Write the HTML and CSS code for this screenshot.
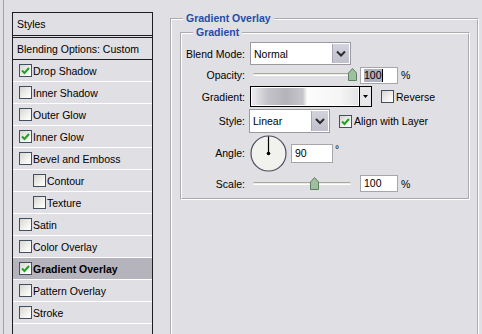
FILE: index.html
```html
<!DOCTYPE html>
<html lang="en">
<head>
    <meta charset="UTF-8">
    <title>Layer Style</title>
    <link rel="stylesheet" href="styles.css">
</head>
<body>

    <div class="window">
        <div class="styles-panel">
            <div class="panel-head">Styles</div>
            <div class="style-row blend-opts">Blending Options: Custom</div>
            <div class="style-row"><span class="cb on"><svg viewBox="0 0 11 11"><polyline points="2,5.5 4.5,8 9,3"/></svg></span>Drop Shadow</div>
            <div class="style-row"><span class="cb"></span>Inner Shadow</div>
            <div class="style-row"><span class="cb"></span>Outer Glow</div>
            <div class="style-row"><span class="cb on"><svg viewBox="0 0 11 11"><polyline points="2,5.5 4.5,8 9,3"/></svg></span>Inner Glow</div>
            <div class="style-row"><span class="cb"></span>Bevel and Emboss</div>
            <div class="style-row sub"><span class="cb"></span>Contour</div>
            <div class="style-row sub"><span class="cb"></span>Texture</div>
            <div class="style-row"><span class="cb"></span>Satin</div>
            <div class="style-row"><span class="cb"></span>Color Overlay</div>
            <div class="style-row active"><span class="cb on"><svg viewBox="0 0 11 11"><polyline points="2,5.5 4.5,8 9,3"/></svg></span>Gradient Overlay</div>
            <div class="style-row"><span class="cb"></span>Pattern Overlay</div>
            <div class="style-row"><span class="cb"></span>Stroke</div>
            <div class="style-row last"></div>
        </div>

        <fieldset class="group outer">
            <legend>Gradient Overlay</legend>
            <fieldset class="group inner">
                <legend>Gradient</legend>
                <div class="fields">
                    <label class="lbl">Blend Mode:</label>
                    <div class="ctl">
                        <div class="select blend">
                            <span class="select-text">Normal</span>
                            <span class="select-btn"><svg viewBox="0 0 16 16"><polyline points="4,6 8,10 12,6"/></svg></span>
                        </div>
                    </div>

                    <label class="lbl">Opacity:</label>
                    <div class="ctl">
                        <div class="slider">
                            <div class="track"></div>
                            <svg class="thumb" style="left: 98px" viewBox="0 0 9 13"><path d="M0.5 12.5 V5 L4.5 0.5 L8.5 5 V12.5 Z"/></svg>
                        </div>
                        <div class="num"><span class="sel">100</span><span class="caret"></span></div>
                        <span class="unit">%</span>
                    </div>

                    <label class="lbl">Gradient:</label>
                    <div class="ctl">
                        <div class="grad-pick">
                            <span class="grad-swatch"></span>
                            <span class="grad-arrow"><svg viewBox="0 0 11 19"><polygon points="3,8 8,8 5.5,11"/></svg></span>
                        </div>
                        <span class="cb"></span>
                        <span class="cb-text">Reverse</span>
                    </div>

                    <label class="lbl">Style:</label>
                    <div class="ctl">
                        <div class="select style">
                            <span class="select-text">Linear</span>
                            <span class="select-btn"><svg viewBox="0 0 16 16"><polyline points="4,6 8,10 12,6"/></svg></span>
                        </div>
                        <span class="cb on"><svg viewBox="0 0 11 11"><polyline points="2,5.5 4.5,8 9,3"/></svg></span>
                        <span class="cb-text">Align with Layer</span>
                    </div>

                    <label class="lbl">Angle:</label>
                    <div class="ctl">
                        <svg class="dial" viewBox="0 0 37 37">
                            <circle class="dial-face" cx="18.5" cy="18.5" r="17.5"/>
                            <line x1="18.5" y1="18.5" x2="18.5" y2="1.5"/>
                            <circle cx="18.5" cy="18.5" r="1.8"/>
                        </svg>
                        <div class="num angle">90</div>
                        <span class="unit deg">°</span>
                    </div>

                    <label class="lbl">Scale:</label>
                    <div class="ctl">
                        <div class="slider">
                            <div class="track"></div>
                            <svg class="thumb" style="left: 60px" viewBox="0 0 9 13"><path d="M0.5 12.5 V5 L4.5 0.5 L8.5 5 V12.5 Z"/></svg>
                        </div>
                        <div class="num">100</div>
                        <span class="unit">%</span>
                    </div>
                </div>
            </fieldset>
        </fieldset>
    </div>

</body>
</html>
```

FILE: styles.css
```css
body {
    margin: 0;
    background-color: #e0dfe3;
    font-family: 'Liberation Sans', Arial, sans-serif;
    font-size: 10.5px;
    color: #000;
    overflow: hidden;
}
.window {
    display: flex;
    align-items: flex-start;
    height: 334px;
    margin-left: 3px;
    border-left: 1px solid #a4a4a8;
    padding: 12px 0 0 8px;
    box-sizing: border-box;
    overflow: hidden;
}

/* left list */
.styles-panel {
    flex: none;
    width: 141px;
    height: 322px;
    overflow: hidden;
    box-sizing: border-box;
    border: 1px solid #1e1e1e;
    border-bottom: none;
}
.panel-head {
    height: 22px;
    line-height: 22px;
    padding-left: 4px;
    border-bottom: 3px double #1e1e1e;
}
.style-row {
    display: flex;
    align-items: center;
    height: 21px;
    padding-left: 6px;
    border-bottom: 1px solid #fff;
    white-space: nowrap;
}
.style-row.blend-opts {
    padding-left: 4px;
    border-bottom-color: #1e1e1e;
}
.style-row.sub {
    padding-left: 20px;
}
.style-row.active {
    background-color: #b5b4bc;
    font-weight: bold;
}
.style-row.last {
    height: 8px;
    border-bottom: none;
}
.style-row .cb {
    margin-right: 1px;
}

/* checkbox */
.cb {
    flex: none;
    display: inline-block;
    width: 13px;
    height: 13px;
    box-sizing: border-box;
    border: 1px solid #3f5063;
    background: linear-gradient(135deg, #d6d6d0, #f6f6f4 70%, #fff);
}
.cb svg {
    display: block;
    width: 11px;
    height: 11px;
}
.cb polyline {
    fill: none;
    stroke: #22a022;
    stroke-width: 2;
}

/* fieldsets */
.group {
    margin: 0;
    border: 2px groove #fff;
    min-width: 0;
}
.group legend {
    color: #1e4ea6;
    font-weight: bold;
    line-height: 13px;
    padding: 0 3px;
    margin-left: 3px;
}
.outer {
    flex: none;
    width: 309px;
    height: 330px;
    margin-left: 17px;
    padding: 1px 7px 0 8px;
    box-sizing: border-box;
}
.inner {
    padding: 0 10px 3px 0;
}
.inner legend {
    margin-left: 11px;
}

.fields {
    display: grid;
    grid-template-columns: 63px 1fr;
    grid-template-rows: 23px 20px 23px 26px 38px 23px;
    column-gap: 5px;
    margin-top: 3px;
}
.lbl {
    text-align: right;
    align-self: center;
    white-space: nowrap;
}
.ctl {
    display: flex;
    align-items: center;
    white-space: nowrap;
}

/* dropdowns */
.select {
    display: flex;
    align-items: center;
    justify-content: space-between;
    box-sizing: border-box;
    border: 1px solid #9a9aa0;
    background-color: #fff;
    padding: 1px;
}
.select.blend {
    width: 101px;
    height: 23px;
}
.select.style {
    width: 81px;
    height: 24px;
    margin-left: -1px;
}
.select-text {
    padding-left: 2px;
}
.select-btn {
    width: 16px;
    height: 100%;
    background: linear-gradient(#d2d3dd, #bfc0cc);
    border-left: 1px solid #a8a9b4;
}
.select-btn svg {
    display: block;
    width: 16px;
    height: 100%;
}
.select-btn polyline {
    fill: none;
    stroke: #2a2a2a;
    stroke-width: 2;
}

/* sliders */
.slider {
    position: relative;
    width: 106px;
    height: 14px;
}
.track {
    margin: 5px 0 0 3px;
    width: 98px;
    height: 3px;
    box-sizing: border-box;
    border-top: 1px solid #a8a8a0;
    border-bottom: 1px solid #fff;
    border-radius: 2px;
    background-color: #eeede2;
}
.thumb {
    position: absolute;
    top: 0;
    width: 9px;
    height: 13px;
}
.thumb path {
    fill: #9fc09f;
    stroke: #5e7e62;
    stroke-width: 1;
}

.num {
    box-sizing: border-box;
    width: 38px;
    height: 17px;
    line-height: 15px;
    margin-left: 4px;
    padding-left: 3px;
    border: 1px solid #a6a6aa;
    background-color: #fff;
    display: flex;
    align-items: center;
}
.num .sel {
    background-color: #aeafbf;
    line-height: 13px;
}
.num .caret {
    width: 1px;
    height: 13px;
    background-color: #000;
}
.num.angle {
    width: 42px;
    height: 19px;
}
.unit {
    margin-left: 3px;
}
.unit.deg {
    align-self: flex-start;
    margin-top: 9px;
    margin-left: 2px;
}

/* gradient picker */
.grad-pick {
    display: flex;
    width: 122px;
    height: 21px;
    box-sizing: border-box;
    border: 1px solid #000;
    background-color: #fff;
}
.grad-swatch {
    flex: 1;
    margin: 1px;
    background: linear-gradient(to right, #ececee, #c4c3c9 15%, #b4b3ba 32%, #c6c5cb 48%, #fcfcfc 52%, #f6f6f6 82%, #e4e4e6);
}
.grad-arrow {
    width: 11px;
    border-left: 1px solid #000;
    background-color: #e8e8ea;
}
.grad-arrow svg {
    display: block;
    width: 11px;
    height: 19px;
}
.grad-pick + .cb,
.select + .cb {
    margin-left: 9px;
}
.cb-text {
    margin-left: 2px;
}

/* angle dial */
.dial {
    width: 37px;
    height: 37px;
}
.dial .dial-face {
    fill: #f1f1ee;
    stroke: #4b4e5e;
    stroke-width: 1.2;
}
.dial line {
    stroke: #000;
    stroke-width: 1.2;
}
```
